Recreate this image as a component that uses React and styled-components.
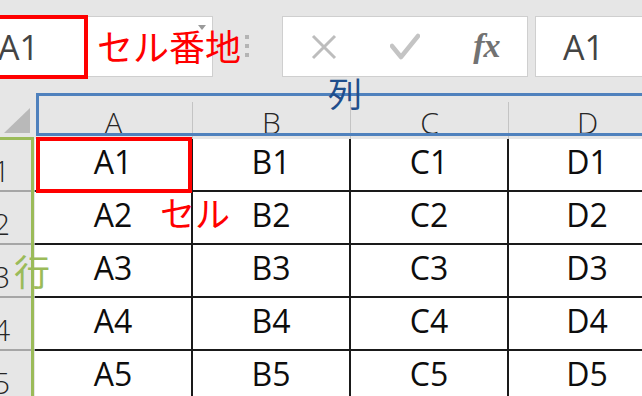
import React from "react";
import styled, { createGlobalStyle } from "styled-components";

const Global = createGlobalStyle`
  html, body { margin: 0; padding: 0; background: #e6e6e6; overflow: hidden; }
  * { box-sizing: border-box; }
`;

const Page = styled.div`
  width: 642px;
  height: 396px;
  overflow: hidden;
  position: relative;
  display: flex;
  flex-direction: column;
  background: #e6e6e6;
  font-family: "Open Sans", "Noto Sans", sans-serif;
`;

const FormulaBar = styled.div`
  position: relative;
  height: 102px;
  flex: none;
  display: flex;
  align-items: flex-start;
  padding-top: 16px;
`;

const Box = styled.div`
  height: 61px;
  background: #ffffff;
  border: 1px solid #cfcfcf;
  position: relative;
  display: flex;
  align-items: center;
`;

const NameBox = styled(Box)`
  margin-left: -20px;
  width: 233px;
  padding-left: 17px;
`;

const BoxText = styled.span`
  font-family: "Open Sans", "Noto Sans", sans-serif;
  font-size: 34px;
  color: #444444;
  line-height: 1;
`;

const Caret = styled.span`
  position: absolute;
  right: 6px;
  top: 8px;
  width: 0;
  height: 0;
  border-left: 4px solid transparent;
  border-right: 4px solid transparent;
  border-top: 5px solid #9a9a9a;
`;

const Frame = styled.div`
  position: absolute;
  border: ${(p) => p.$w || 4}px solid ${(p) => p.$color};
  pointer-events: none;
`;

const Grip = styled.div`
  margin-left: 32px;
  margin-top: 19px;
  display: flex;
  flex-direction: column;
  gap: 5px;
`;

const Dot = styled.span`
  width: 4px;
  height: 4px;
  background: #b4b4b4;
`;

const FxBox = styled(Box)`
  margin-left: 33px;
  width: 246px;
`;

const FxSlot = styled.div`
  width: 82px;
  height: 100%;
  display: flex;
  align-items: center;
  justify-content: center;
`;

const FxText = styled.span`
  font-family: "Liberation Serif", "DejaVu Serif", serif;
  font-style: italic;
  font-weight: 700;
  font-size: 34px;
  color: #727272;
  line-height: 1;
  letter-spacing: -1px;
  margin-top: -2px;
`;

const InputBox = styled(Box)`
  margin-left: 7px;
  flex: 1;
  margin-right: -20px;
  padding-left: 27px;
`;

const Label = styled.span`
  position: absolute;
  left: ${(p) => p.$x}px;
  top: ${(p) => p.$y}px;
  font-family: "Noto Sans CJK JP", "Noto Sans", sans-serif;
  font-size: ${(p) => p.$size}px;
  line-height: 1;
  color: ${(p) => p.$color};
  white-space: nowrap;
  z-index: 5;
`;

const Sheet = styled.div`
  position: relative;
  display: grid;
  grid-template-columns: 35px repeat(4, 158px);
  grid-auto-rows: 53px;
  grid-template-rows: 37px;
`;

const Corner = styled.div`
  background: #e6e6e6;
  position: relative;
`;

const Triangle = styled.span`
  position: absolute;
  left: 4px;
  top: 6px;
  width: 0;
  height: 0;
  border-left: 26px solid transparent;
  border-bottom: 25px solid #b9b9b9;
`;

const ColHead = styled.div`
  background: #e6e6e6;
  border-right: 1px solid #c4c4c4;
  display: flex;
  align-items: flex-end;
  justify-content: center;
  font-family: "Open Sans", "Noto Sans", sans-serif;
  font-weight: 300;
  font-size: 30px;
  line-height: 1;
  color: #262626;
  padding-bottom: 1px;
`;

const RowHead = styled.div`
  background: #e6e6e6;
  border-bottom: 2px solid #a6a6a6;
  display: flex;
  align-items: flex-end;
  justify-content: flex-end;
  padding-right: 25px;
  padding-bottom: 4px;
  font-family: "Open Sans", "Noto Sans", sans-serif;
  font-weight: 300;
  font-size: 30px;
  line-height: 1;
  color: #262626;
`;

const Cell = styled.div`
  background: #ffffff;
  border-right: 2px solid #1a1a1a;
  border-bottom: 2px solid #1a1a1a;
  display: flex;
  align-items: center;
  justify-content: center;
  padding-bottom: 6px;
  font-family: "Open Sans", "Noto Sans", sans-serif;
  font-size: 32px;
  line-height: 1;
  color: #0d0d0d;
`;

const cols = ["A", "B", "C", "D"];
const rows = [1, 2, 3, 4, 5];

export default function App() {
  return (
    <Page>
      <Global />
      <FormulaBar>
        <NameBox>
          <BoxText>A1</BoxText>
          <Caret />
          <Frame $color="#ff0000" $w={4} style={{ left: -4, top: -2, width: 111, height: 64 }} />
        </NameBox>
        <Grip>
          <Dot />
          <Dot />
          <Dot />
        </Grip>
        <FxBox>
          <FxSlot>
            <svg width="26" height="26" viewBox="0 0 26 26">
              <path d="M2 2 L24 24 M24 2 L2 24" stroke="#bdbdbd" strokeWidth="3" fill="none" />
            </svg>
          </FxSlot>
          <FxSlot>
            <svg width="30" height="28" viewBox="0 0 30 28">
              <path d="M2 13 L11 24 L28 3" stroke="#c4c4c4" strokeWidth="4.5" fill="none" strokeLinecap="round" strokeLinejoin="round" />
            </svg>
          </FxSlot>
          <FxSlot>
            <FxText>fx</FxText>
          </FxSlot>
        </FxBox>
        <InputBox>
          <BoxText>A1</BoxText>
        </InputBox>
        <Label $x={97} $y={27} $size={36} $color="#ff0000">セル番地</Label>
      </FormulaBar>
      <Sheet>
        <Corner>
          <Triangle />
        </Corner>
        {cols.map((c) => (
          <ColHead key={c}>{c}</ColHead>
        ))}
        {rows.map((r) => (
          <React.Fragment key={r}>
            <RowHead>{r}</RowHead>
            {cols.map((c) => (
              <Cell key={c}>{c + r}</Cell>
            ))}
          </React.Fragment>
        ))}
        <Frame $color="#4f81bd" $w={3} style={{ left: 36, top: -9, right: -20, height: 43 }} />
        <Frame $color="#9bbb59" $w={3} style={{ left: -20, top: 35, width: 54, height: 400 }} />
        <Frame $color="#ff0000" $w={4} style={{ left: 36, top: 35, width: 156, height: 56 }} />
        <Label $x={328} $y={-26} $size={34} $color="#1f4e8c">列</Label>
        <Label $x={160} $y={92} $size={35} $color="#ff0000">セル</Label>
        <Label $x={14} $y={150} $size={36} $color="#9bbb59">行</Label>
      </Sheet>
    </Page>
  );
}
